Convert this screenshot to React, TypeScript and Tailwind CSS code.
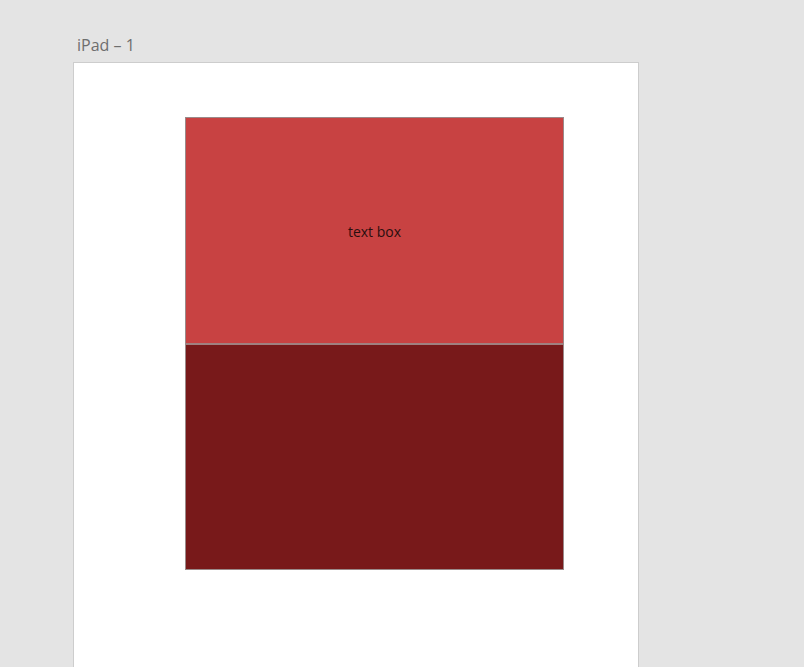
import React from "react";

const App = () => {
  return (
    <div className="h-screen overflow-hidden bg-[#e4e4e4] pl-[73px] pt-[34px] font-['Open_Sans',sans-serif]">
      <div className="pl-[4px] text-[16px] leading-[22px] text-[#6e6e6e]">iPad – 1</div>
      <div className="mt-[6px] h-[700px] w-[566px] border border-[#cdcdcd] bg-white pl-[111px] pt-[54px]">
        <div className="w-[379px] border border-[#9a8a8a]">
          <div className="flex h-[225px] items-center justify-center bg-[#c84242] pt-[2px]">
            <span className="text-[14px] text-[#2a0f0f]">text box</span>
          </div>
          <div className="h-[2px] bg-[#a08080]" />
          <div className="h-[224px] bg-[#78191a]" />
        </div>
      </div>
    </div>
  );
};

export default App;
